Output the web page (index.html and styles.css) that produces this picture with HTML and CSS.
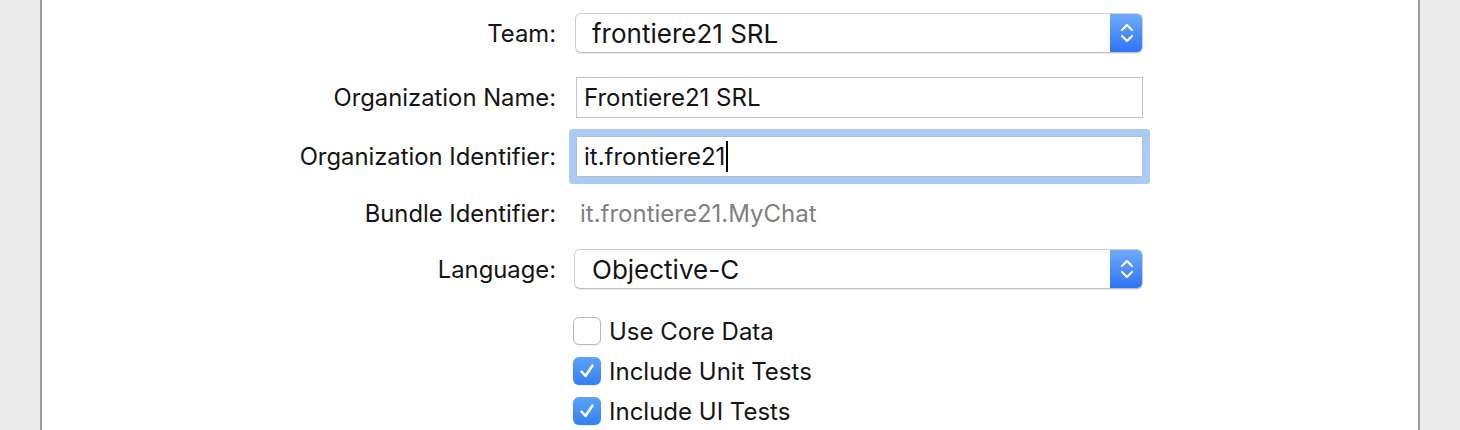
FILE: index.html
```html
<!DOCTYPE html>
<html lang="en">
<head>
<meta charset="utf-8">
<title>Project options</title>
<link rel="stylesheet" href="styles.css">
</head>
<body>
<div class="window">
  <div class="panel">
    <div class="row row-team">
      <div class="label">Team:</div>
      <div class="popup popup-team">
        <span class="popup-text">frontiere21 SRL</span>
        <span class="stepper">
          <svg width="14" height="22" viewBox="0 0 14 22"><path d="M2 8 L7 3 L12 8 M2 14 L7 19 L12 14" fill="none" stroke="#fff" stroke-width="2.2" stroke-linecap="round" stroke-linejoin="round"/></svg>
        </span>
      </div>
    </div>
    <div class="row row-orgname">
      <div class="label">Organization Name:</div>
      <div class="field">Frontiere21 SRL</div>
    </div>
    <div class="row row-orgid">
      <div class="label">Organization Identifier:</div>
      <div class="field focused">it.frontiere21<span class="caret"></span></div>
    </div>
    <div class="row row-bundle">
      <div class="label">Bundle Identifier:</div>
      <div class="bundle">it.frontiere21.MyChat</div>
    </div>
    <div class="row row-lang">
      <div class="label">Language:</div>
      <div class="popup popup-lang">
        <span class="popup-text">Objective-C</span>
        <span class="stepper">
          <svg width="14" height="22" viewBox="0 0 14 22"><path d="M2 8 L7 3 L12 8 M2 14 L7 19 L12 14" fill="none" stroke="#fff" stroke-width="2.2" stroke-linecap="round" stroke-linejoin="round"/></svg>
        </span>
      </div>
    </div>
    <div class="row row-check first-check">
      <div class="label"></div>
      <div class="check-item"><span class="checkbox"></span><span class="check-label">Use Core Data</span></div>
    </div>
    <div class="row row-check">
      <div class="label"></div>
      <div class="check-item"><span class="checkbox checked"><svg width="18" height="18" viewBox="0 0 18 18"><path d="M3.5 9.5 L7.5 14 L14.5 3.5" fill="none" stroke="#fff" stroke-width="2.5" stroke-linecap="round" stroke-linejoin="round"/></svg></span><span class="check-label">Include Unit Tests</span></div>
    </div>
    <div class="row row-check">
      <div class="label"></div>
      <div class="check-item"><span class="checkbox checked"><svg width="18" height="18" viewBox="0 0 18 18"><path d="M3.5 9.5 L7.5 14 L14.5 3.5" fill="none" stroke="#fff" stroke-width="2.5" stroke-linecap="round" stroke-linejoin="round"/></svg></span><span class="check-label">Include UI Tests</span></div>
    </div>
  </div>
</div>
</body>
</html>
```
FILE: styles.css
```css
html, body {
  margin: 0;
  padding: 0;
  background: #ececec;
  height: 430px;
  overflow: hidden;
}

.window {
  display: flex;
  height: 430px;
}

.panel {
  margin-left: 40px;
  width: 1376px;
  height: 430px;
  background: #ffffff;
  border-left: 2px solid #9d9d9d;
  border-right: 2px solid #9d9d9d;
  display: flex;
  flex-direction: column;
  font-family: "Inter", "Liberation Sans", sans-serif;
  font-size: 23.8px;
  color: #141414;
}

.row {
  display: flex;
  align-items: center;
}

.label {
  width: 514px;
  text-align: right;
  margin-right: 20px;
  flex: none;
  white-space: nowrap;
}

.row-team { margin-top: 13px; height: 40px; }
.row-orgname { margin-top: 24px; height: 41px; }
.row-orgid { margin-top: 18px; height: 41px; }
.row-bundle { margin-top: 23px; height: 26px; }
.row-lang { margin-top: 23px; height: 40px; }
.row-check { margin-top: 12px; height: 28px; }
.row-check.first-check { margin-top: 28px; }

.popup {
  box-sizing: border-box;
  height: 40px;
  width: 568px;
  border: 1px solid #cfcfcf;
  border-bottom-color: #bdbdbd;
  border-radius: 6px;
  display: flex;
  align-items: center;
  overflow: hidden;
  box-shadow: 0 1px 1px rgba(0,0,0,0.08);
}
.popup-team { margin-left: -1px; }
.popup-lang { margin-left: -2px; width: 569px; }

.popup-text {
  flex: 1;
  padding-left: 16px;
  font-size: 26px;
  color: #141414;
}
.popup-lang .popup-text { padding-left: 17px; }

.stepper {
  width: 33px;
  height: 40px;
  margin: -1px -1px -1px 0;
  background: linear-gradient(#71acf9, #2c73f5);
  display: flex;
  align-items: center;
  justify-content: center;
  border-radius: 0 6px 6px 0;
}

.field {
  box-sizing: border-box;
  width: 567px;
  height: 41px;
  border: 1px solid #c3c3c3;
  padding-left: 7px;
  display: flex;
  align-items: center;
  font-size: 24px;
  color: #141414;
}

.field.focused {
  border-color: #bdbdbd;
  box-shadow: 0 0 0 7px #a9cbf5;
  border-radius: 1px;
}

.caret {
  display: inline-block;
  width: 2px;
  height: 31px;
  background: #000;
  margin-left: 1px;
}

.bundle {
  margin-left: 4px;
  color: #808080;
  font-size: 24px;
}

.check-item {
  display: flex;
  align-items: center;
  margin-left: -3px;
}

.checkbox {
  box-sizing: border-box;
  width: 28px;
  height: 28px;
  border: 1px solid #b8b8b8;
  border-radius: 6px;
  background: #fff;
  margin-right: 8px;
  display: flex;
  align-items: center;
  justify-content: center;
  box-shadow: 0 1px 1px rgba(0,0,0,0.06);
}

.checkbox.checked {
  border: none;
  background: linear-gradient(#5ca3f8, #347ff3);
}

.check-label {
  font-size: 24px;
  color: #141414;
}
```
